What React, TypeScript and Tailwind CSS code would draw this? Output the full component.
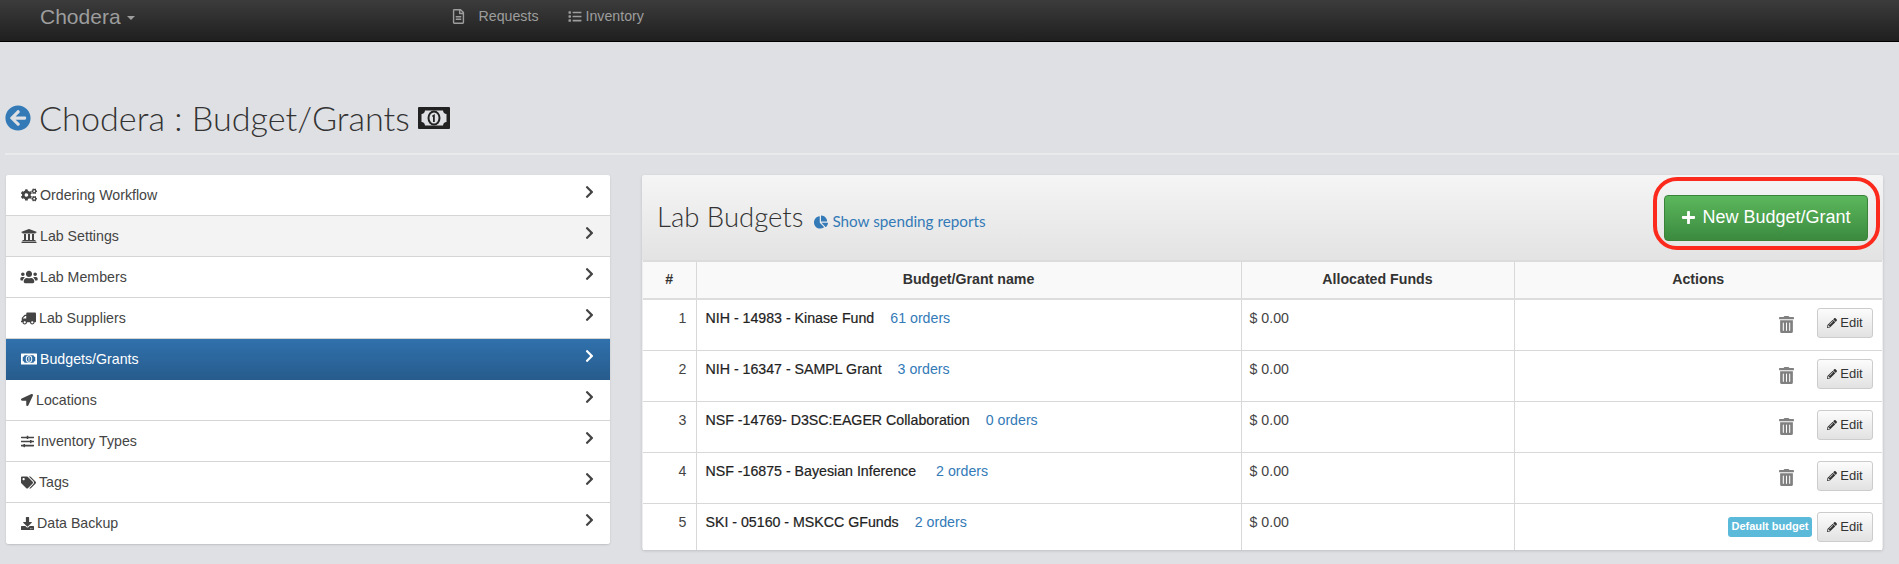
import {
  FaArrowCircleLeft,
  FaChartPie,
  FaChevronRight,
  FaCogs,
  FaDownload,
  FaList,
  FaLocationArrow,
  FaPencilAlt,
  FaPlus,
  FaRegFileAlt,
  FaSlidersH,
  FaTags,
  FaTrashAlt,
  FaTruck,
  FaUniversity,
  FaUsers,
} from 'react-icons/fa';

const MoneyIcon = ({ className, field }: { className: string; field: string }) => (
  <svg viewBox="0 0 32 22" className={className} fill="currentColor">
    <rect x="0" y="0" width="32" height="22" rx="1" />
    <path
      d="M7 3.5h18a4 4 0 0 0 3.5 3.5v8a4 4 0 0 0-3.5 3.5H7A4 4 0 0 0 3.5 15V7A4 4 0 0 0 7 3.5z"
      fill={field}
    />
    <ellipse cx="16" cy="11" rx="6.5" ry="7.5" />
    <ellipse cx="16" cy="11" rx="4.5" ry="5.5" fill={field} />
    <path d="M14.2 8.6l2.6-1.6v8h-1.8V9.6l-0.8 0.4z" />
  </svg>
);

const menu = [
  { label: 'Ordering Workflow', icon: <FaCogs className="w-4 h-4" /> },
  { label: 'Lab Settings', icon: <FaUniversity className="w-4 h-4" />, hover: true },
  { label: 'Lab Members', icon: <FaUsers className="w-4 h-4 scale-110" /> },
  { label: 'Lab Suppliers', icon: <FaTruck className="w-[15px] h-[15px] -scale-x-100" /> },
  { label: 'Budgets/Grants', icon: <MoneyIcon className="w-4 h-3 text-white" field="#2d6ba3" />, active: true },
  { label: 'Locations', icon: <FaLocationArrow className="w-3 h-3" /> },
  { label: 'Inventory Types', icon: <FaSlidersH className="w-[13px] h-[13px]" /> },
  { label: 'Tags', icon: <FaTags className="w-[15px] h-[15px]" /> },
  { label: 'Data Backup', icon: <FaDownload className="w-[13px] h-[13px]" /> },
];

const budgets = [
  { name: 'NIH - 14983 - Kinase Fund', orders: '61 orders', gap: 'ml-[16px]' },
  { name: 'NIH - 16347 - SAMPL Grant', orders: '3 orders', gap: 'ml-[16px]' },
  { name: 'NSF -14769- D3SC:EAGER Collaboration', orders: '0 orders', gap: 'ml-[16px]' },
  { name: 'NSF -16875 - Bayesian Inference', orders: '2 orders', gap: 'ml-[20px]' },
  { name: 'SKI - 05160 - MSKCC GFunds', orders: '2 orders', gap: 'ml-[16px]', isDefault: true },
];

export default function App() {
  return (
    <div className="h-[564px] overflow-hidden bg-[#dfe0e4] font-['Liberation_Sans',sans-serif] text-[14.2px] text-[#333]">
      <nav className="h-[42px] flex items-start bg-gradient-to-b from-[#3c3c3c] to-[#1f1f1f] border-b border-black text-[#9d9d9d]">
        <div className="ml-[40px] mt-[4px] flex items-center gap-[6px] text-[21px] leading-[26px]">
          Chodera
          <span className="mt-[2px] border-x-[4px] border-t-[4px] border-x-transparent border-t-[#9d9d9d]" />
        </div>
        <div className="ml-[317px] mt-[7px] flex items-center leading-[18px]">
          <FaRegFileAlt className="w-[13px] h-[15px]" />
          <span className="ml-[14px]">Requests</span>
          <FaList className="ml-[29px] w-[14px] h-[13px]" />
          <span className="ml-[4px]">Inventory</span>
        </div>
      </nav>

      <header className="mt-[62px] ml-[5px] flex items-center h-[28px]">
        <FaArrowCircleLeft className="w-[26px] h-[26px] text-[#337ab7]" />
        <h1 className="ml-[8px] font-['Lato',sans-serif] font-light text-[34.2px] leading-[28px] text-[#333]">
          Chodera : Budget/Grants
        </h1>
        <MoneyIcon className="ml-[8px] w-[32px] h-[22px] text-[#222]" field="#dfe0e4" />
      </header>
      <div className="mt-[21px] ml-[5px] h-[2px] bg-[#e9eaec]" />

      <div className="mt-[20px] flex items-start">
        <ul className="ml-[6px] w-[604px] bg-white rounded-[3px] shadow-[0_1px_2px_rgba(0,0,0,0.15)] overflow-hidden">
          {menu.map((item) => (
            <li
              key={item.label}
              className={`h-[41px] flex items-start pl-[15px] pr-[14px] border-b last:border-b-0 ${
                item.active
                  ? 'bg-gradient-to-b from-[#3071ad] to-[#275c8d] text-white border-[#275c8d]'
                  : item.hover
                    ? 'bg-[#f3f3f3] text-[#444] border-[#d5d5d5]'
                    : 'bg-white text-[#444] border-[#d5d5d5]'
              }`}
            >
              <span className="mt-[11px] flex items-center gap-[3px] leading-[18px]">
                {item.icon}
                {item.label}
              </span>
              <FaChevronRight className="ml-auto mt-[10px] w-[13px] h-[14px]" />
            </li>
          ))}
        </ul>

        <section className="relative ml-[32px] w-[1241px] rounded-[3px] bg-[#eeeeee] shadow-[0_1px_3px_rgba(0,0,0,0.15)] overflow-visible">
          <div className="h-[85px] flex items-center pl-[15px] pr-[15px] rounded-t-[3px] bg-gradient-to-b from-[#f5f5f5] to-[#e3e3e3]">
            <h2 className="-mt-[2px] font-['Lato',sans-serif] font-light text-[27.5px] leading-[30px] text-[#333]">Lab Budgets</h2>
            <a className="ml-[11px] mt-[8px] flex items-center gap-[4px] font-['Lato',sans-serif] text-[15.25px] text-[#337ab7]">
              <FaChartPie className="w-[14px] h-[14px]" />
              Show spending reports
            </a>
            <button className="ml-auto w-[204px] h-[46px] flex items-center justify-center gap-[6px] rounded-[4px] border border-[#398439] bg-gradient-to-b from-[#5cb85c] to-[#3b8a3f] text-white text-[18px]">
              <FaPlus className="w-[15px] h-[15px]" />
              <span className="-mt-[1px]">New Budget/Grant</span>
            </button>
          </div>
          <span className="absolute left-[1011px] top-[2px] w-[227px] h-[73px] rounded-[24px] border-[4px] border-[#fb2a1c]" />

          <table className="mx-[1px] w-[1239px] table-fixed border-collapse bg-white border-t-2 border-[#dcdcdc]">
            <thead>
              <tr className="h-[38px] bg-[#f9f9f9] border-b-[2px] border-[#dddddd] font-bold">
                <th className="w-[53px] border-r border-[#d8d8d8]">#</th>
                <th className="w-[545px] border-r border-[#d8d8d8]">Budget/Grant name</th>
                <th className="w-[273px] border-r border-[#d8d8d8]">Allocated Funds</th>
                <th>Actions</th>
              </tr>
            </thead>
            <tbody>
              {budgets.map((b, i) => (
                <tr key={b.name} className="h-[51px] last:h-[47px] border-b last:border-b-0 border-[#d8d8d8]">
                  <td className="pr-[9px] pt-[8px] align-top text-right text-[#444] border-r border-[#d8d8d8]">{i + 1}</td>
                  <td className="pl-[9px] pt-[8px] align-top border-r border-[#d8d8d8]">
                    <span className="text-[#222] [-webkit-text-stroke:0.2px_#222]">{b.name}</span>
                    <a className={`${b.gap} text-[#337ab7]`}>{b.orders}</a>
                  </td>
                  <td className="pl-[8px] pt-[8px] align-top text-[#444] border-r border-[#d8d8d8]">$ 0.00</td>
                  <td className="pr-[9px] pt-[8px] align-top">
                    <div className="flex items-center justify-end">
                      {b.isDefault ? (
                        <span className="mr-[5px] h-[20px] w-[84px] flex items-center justify-center rounded-[3px] bg-[#5bb9d9] text-white text-[11px] font-bold">
                          Default budget
                        </span>
                      ) : (
                        <FaTrashAlt className="mr-[23px] mt-[3px] w-[15px] h-[17px] text-[#808080]" />
                      )}
                      <button className="w-[56px] h-[30px] flex items-center justify-center gap-[3px] rounded-[3px] border border-[#cccccc] bg-gradient-to-b from-[#fcfcfc] to-[#e2e2e2] text-[13px] text-[#333]">
                        <FaPencilAlt className="w-[10px] h-[10px]" />
                        Edit
                      </button>
                    </div>
                  </td>
                </tr>
              ))}
            </tbody>
          </table>
        </section>
      </div>
    </div>
  );
}
